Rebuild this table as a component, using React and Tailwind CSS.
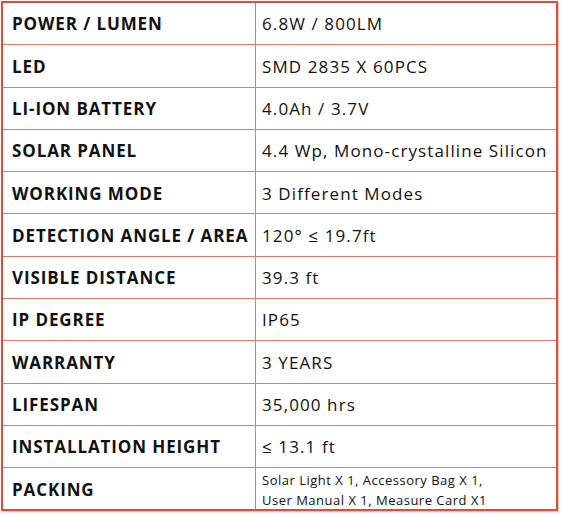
const specs = [
  ["POWER / LUMEN", "6.8W / 800LM"],
  ["LED", "SMD 2835 X 60PCS"],
  ["LI-ION BATTERY", "4.0Ah / 3.7V"],
  ["SOLAR PANEL", "4.4 Wp, Mono-crystalline Silicon"],
  ["WORKING MODE", "3 Different Modes"],
  ["DETECTION ANGLE / AREA", "120° ≤ 19.7ft"],
  ["VISIBLE DISTANCE", "39.3 ft"],
  ["IP DEGREE", "IP65"],
  ["WARRANTY", "3 YEARS"],
  ["LIFESPAN", "35,000 hrs"],
  ["INSTALLATION HEIGHT", "≤ 13.1 ft"],
];

export default function App() {
  return (
    <div className="w-[563px] h-[514px] bg-white pl-[1px] pt-[1px]">
      <div
        className="w-[557px] border-2 border-[#e24b37] text-[#111] shadow-[1px_1px_2px_rgba(0,0,0,0.25)]"
        style={{ fontFamily: '"Open Sans", "Noto Sans", sans-serif' }}
      >
        {specs.map(([label, value]) => (
          <div key={label} className="flex h-[42.3px] border-b border-[#e8736a]">
            <div className="w-[253px] shrink-0 flex items-center pl-[9px] pt-px border-r border-[#e8736a] font-bold text-[17px] tracking-[0.9px]">
              {label}
            </div>
            <div className="flex-1 flex items-center pl-[6px] pt-px text-[17px] tracking-[1.1px]">{value}</div>
          </div>
        ))}
        <div className="flex h-[41px]">
          <div className="w-[253px] shrink-0 flex items-center pl-[9px] pt-[2px] border-r border-[#e8736a] font-bold text-[17px] tracking-[0.9px]">
            PACKING
          </div>
          <div className="flex-1 flex flex-col justify-center pl-[6px] pt-[3px] text-[13px] leading-[20px] tracking-[0.5px]">
            <span>Solar Light X 1, Accessory Bag X 1,</span>
            <span>User Manual X 1, Measure Card X1</span>
          </div>
        </div>
      </div>
    </div>
  );
}
